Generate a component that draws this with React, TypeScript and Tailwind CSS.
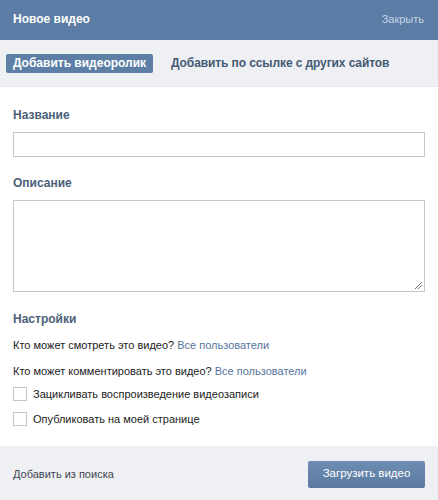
import React from "react";

export default function App() {
  const font = { fontFamily: '"Liberation Sans", Arial, sans-serif' };
  return (
    <div className="w-[438px] h-[500px] flex flex-col bg-white text-[11px] text-[#222]" style={font}>
      <div className="h-[40px] bg-[#5a7ca5] flex items-center justify-between px-[13px] pb-[2px]">
        <span className="text-white font-bold text-[12px]">Новое видео</span>
        <span className="text-[#c6d5e6] text-[11px] mr-[1px]">Закрыть</span>
      </div>
      <div className="h-[47px] bg-[#eef0f3] flex items-center px-[6px] gap-[18px] border-b border-[#e4e8ee]">
        <div className="h-[19px] w-[147px] bg-[#5d7fa6] rounded-[2px] flex items-center justify-center text-white font-bold text-[12px]">
          Добавить видеоролик
        </div>
        <span className="text-[#445a74] font-bold text-[12px] tracking-[-0.1px]">Добавить по ссылке с других сайтов</span>
      </div>
      <div className="flex-1 flex flex-col px-[13px] pt-[20px]">
        <div className="text-[#4b5f78] font-bold text-[12px] leading-[16px]">Название</div>
        <div className="mt-[9px] h-[25px] w-[412px] border border-[#c3c8ce]" />
        <div className="mt-[18px] text-[#4b5f78] font-bold text-[12px] leading-[16px]">Описание</div>
        <div className="mt-[9px] h-[92px] w-[412px] border border-[#c3c8ce] relative">
          <svg className="absolute right-[1px] bottom-[1px]" width="9" height="9" viewBox="0 0 9 9">
            <line x1="1" y1="8" x2="8" y2="1" stroke="#555" strokeWidth="0.8" />
            <line x1="4" y1="8" x2="8" y2="4" stroke="#555" strokeWidth="0.8" />
          </svg>
        </div>
        <div className="mt-[19px] text-[#4b5f78] font-bold text-[12px] leading-[16px]">Настройки</div>
        <div className="mt-[10px] leading-[16px]">
          Кто может смотреть это видео? <span className="text-[#56759b]">Все пользователи</span>
        </div>
        <div className="mt-[10px] leading-[16px]">
          Кто может комментировать это видео? <span className="text-[#56759b]">Все пользователи</span>
        </div>
        <div className="mt-[8px] flex items-center gap-[6px] h-[14px]">
          <div className="w-[14px] h-[14px] border border-[#c3c8ce] bg-white" />
          <span>Зацикливать воспроизведение видеозаписи</span>
        </div>
        <div className="mt-[11px] flex items-center gap-[6px] h-[14px]">
          <div className="w-[14px] h-[14px] border border-[#c3c8ce] bg-white" />
          <span>Опубликовать на моей странице</span>
        </div>
      </div>
      <div className="h-[54px] bg-[#eef0f3] flex items-center justify-between px-[13px] pt-[2px]">
        <span className="text-[#3e4650]">Добавить из поиска</span>
        <div className="h-[27px] w-[117px] rounded-[2px] bg-gradient-to-b from-[#6d8db2] to-[#5a7aa0] flex items-center justify-center text-white text-[11.5px]">
          Загрузить видео
        </div>
      </div>
    </div>
  );
}
